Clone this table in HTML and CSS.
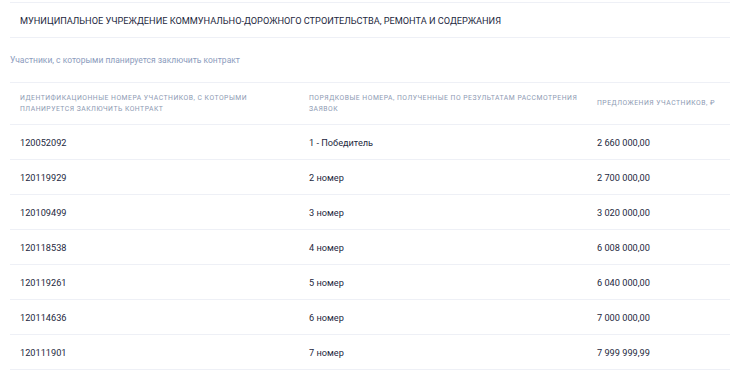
FILE: index.html
```html
<!DOCTYPE html>
<html lang="ru">
<head>
<meta charset="utf-8">
<link rel="stylesheet" href="styles.css">
</head>
<body>
<div class="page">
  <div class="org">МУНИЦИПАЛЬНОЕ УЧРЕЖДЕНИЕ КОММУНАЛЬНО-ДОРОЖНОГО СТРОИТЕЛЬСТВА, РЕМОНТА И СОДЕРЖАНИЯ</div>
  <div class="subtitle">Участники, с которыми планируется заключить контракт</div>
  <table class="grid">
    <thead>
      <tr>
        <th class="c1">Идентификационные номера участников, с которыми планируется заключить контракт</th>
        <th class="c2">Порядковые номера, полученные по результатам рассмотрения заявок</th>
        <th class="c3">Предложения участников, ₽</th>
      </tr>
    </thead>
    <tbody>
      <tr><td>120052092</td><td>1 - Победитель</td><td>2 660 000,00</td></tr>
      <tr><td>120119929</td><td>2 номер</td><td>2 700 000,00</td></tr>
      <tr><td>120109499</td><td>3 номер</td><td>3 020 000,00</td></tr>
      <tr><td>120118538</td><td>4 номер</td><td>6 008 000,00</td></tr>
      <tr><td>120119261</td><td>5 номер</td><td>6 040 000,00</td></tr>
      <tr><td>120114636</td><td>6 номер</td><td>7 000 000,00</td></tr>
      <tr><td>120111901</td><td>7 номер</td><td>7 999 999,99</td></tr>
    </tbody>
  </table>
</div>
</body>
</html>
```
FILE: styles.css
```css
html, body {
  margin: 0;
  padding: 0;
  background: #ffffff;
}
body {
  font-family: Roboto, "Noto Sans", sans-serif;
  color: #1d2840;
}
.page {
  padding: 2px 0 0 10px;
}
.org {
  border-top: 1px solid #eef0f6;
  border-bottom: 1px solid #eef0f6;
  height: 36px;
  box-sizing: border-box;
  display: flex;
  align-items: center;
  padding-left: 10px;
  font-size: 9.2px;
  color: #1d2840;
}
.subtitle {
  height: 44px;
  display: flex;
  align-items: center;
  font-size: 8.5px;
  color: #8c9cbd;
}
.grid {
  width: 100%;
  border-collapse: collapse;
  table-layout: fixed;
}
.grid th {
  text-align: left;
  font-weight: 400;
  text-transform: uppercase;
  font-size: 6.8px;
  letter-spacing: 0.5px;
  line-height: 11px;
  color: #8e9ab3;
  height: 41px;
  padding: 0 4px 0 10px;
  vertical-align: middle;
  border-top: 1px solid #eef0f6;
  border-bottom: 1px solid #eef0f6;
}
.grid th.c1 { width: 275px; }
.grid th.c2 { width: 274px; }
.grid td {
  height: 34px;
  padding: 0 10px;
  font-size: 9.2px;
  color: #1d2840;
  border-bottom: 1px solid #eef0f6;
  vertical-align: middle;
}
```
